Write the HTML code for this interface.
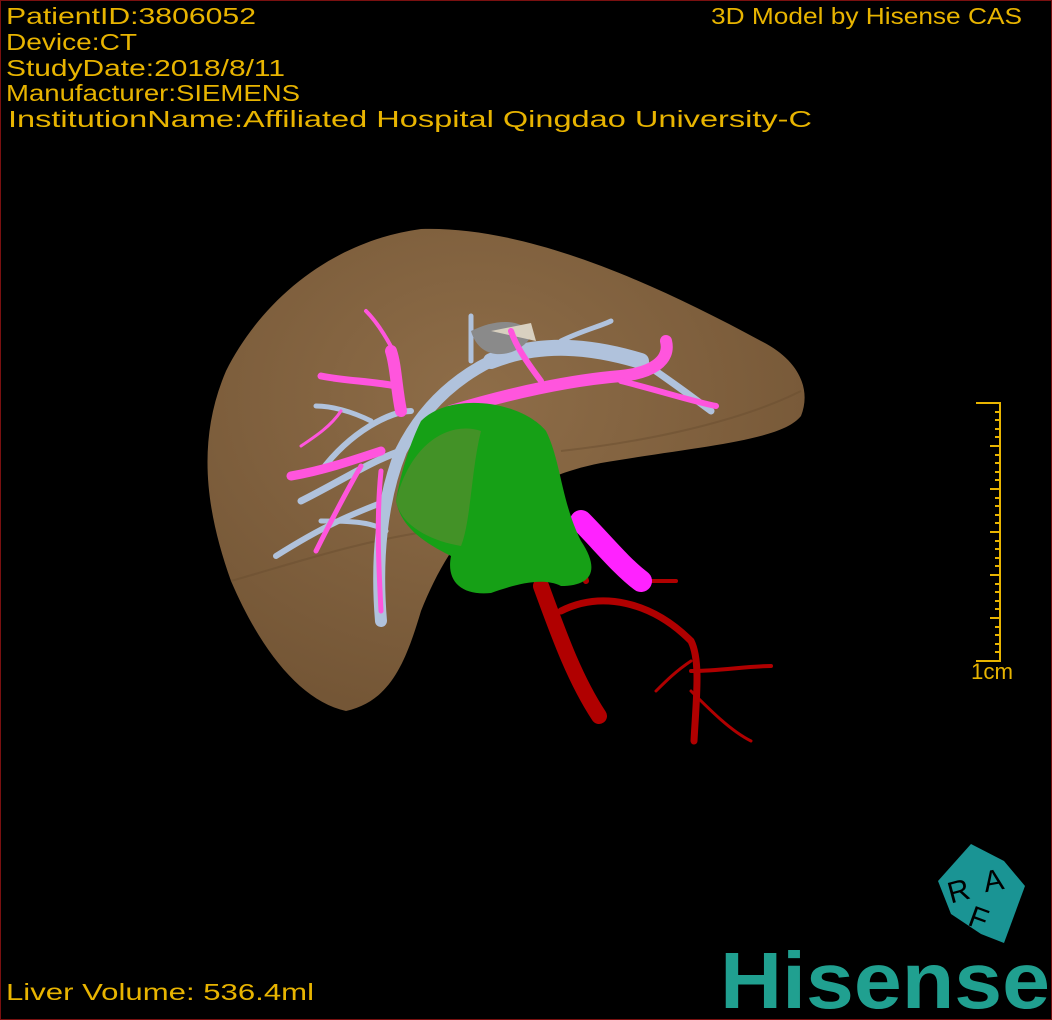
<!DOCTYPE html>
<html><head><meta charset="utf-8"><style>
html,body{margin:0;padding:0;background:#000;}
#c{position:relative;width:1050px;height:1018px;border:1px solid #7a1010;background:#000;overflow:hidden;}
</style></head><body><div id="c">
<svg width="1050" height="1018" style="position:absolute;left:0;top:0">
<defs><radialGradient id="lg" cx="0.45" cy="0.35" r="0.7"><stop offset="0" stop-color="#8e6d48"/><stop offset="1" stop-color="#735535"/></radialGradient></defs>
<g fill="#e8b400" font-family="Liberation Sans,sans-serif" font-size="23" lengthAdjust="spacingAndGlyphs">
<text x="5" y="23" textLength="250" lengthAdjust="spacingAndGlyphs">PatientID:3806052</text>
<text x="5" y="49" textLength="131" lengthAdjust="spacingAndGlyphs">Device:CT</text>
<text x="5" y="75" textLength="279" lengthAdjust="spacingAndGlyphs">StudyDate:2018/8/11</text>
<text x="5" y="100" textLength="294" lengthAdjust="spacingAndGlyphs">Manufacturer:SIEMENS</text>
<text x="7" y="126" textLength="804" lengthAdjust="spacingAndGlyphs">InstitutionName:Affiliated Hospital Qingdao University-C</text>
<text x="710" y="23" textLength="311" lengthAdjust="spacingAndGlyphs">3D Model by Hisense CAS</text>
<text x="5" y="999" textLength="308" lengthAdjust="spacingAndGlyphs">Liver Volume:  536.4ml</text>
<text x="970" y="678" textLength="42" lengthAdjust="spacingAndGlyphs" font-size="22">1cm</text>
</g>
<path d="M420,228 C520,225 640,275 760,340 C800,360 810,390 800,415 C780,440 700,445 600,462 C560,470 545,480 520,488 C470,510 440,560 420,610 C405,660 390,700 345,710 C300,700 260,650 230,580 C205,510 195,440 225,370 C260,300 330,240 420,228 Z" fill="url(#lg)"/>
<path d="M230,580 C300,560 360,540 430,530" stroke="#6a4e30" stroke-width="2" fill="none" opacity=".5"/>
<path d="M560,450 C650,440 740,420 800,390" stroke="#6a4e30" stroke-width="2" fill="none" opacity=".5"/>
<g stroke="#b0c2dc" stroke-linecap="round" fill="none">
<path d="M380,620 C375,560 380,500 400,450 C420,410 450,380 490,360" stroke-width="12"/>
<path d="M490,360 C540,340 590,345 640,360" stroke-width="16"/>
<path d="M640,360 C670,380 690,395 710,410" stroke-width="7"/>
<path d="M400,450 C370,460 340,480 300,500" stroke-width="7"/>
<path d="M385,500 C360,510 330,520 275,555" stroke-width="6"/>
<path d="M370,420 C350,410 330,405 315,405" stroke-width="5"/>
<path d="M410,410 C390,410 350,430 320,470" stroke-width="6"/>
<path d="M385,530 C370,520 345,520 320,520" stroke-width="5"/>
<path d="M560,340 C580,330 600,325 610,320" stroke-width="5"/>
<path d="M470,360 L470,315" stroke-width="5"/>
</g>
<path d="M470,330 C500,315 525,320 530,335 C520,355 480,365 470,330Z" fill="#8a8a8a"/>
<path d="M490,330 L530,322 L535,340 Z" fill="#d8d0c0"/>
<g stroke="#ff55dd" stroke-linecap="round" fill="none">
<path d="M450,410 C500,395 560,380 620,375 C650,372 670,360 665,340" stroke-width="12"/>
<path d="M620,380 C660,390 690,400 715,405" stroke-width="6"/>
<path d="M540,380 C525,360 515,345 510,330" stroke-width="6"/>
<path d="M400,410 C395,385 395,365 390,350" stroke-width="12"/>
<path d="M395,385 C370,380 345,380 320,375" stroke-width="7"/>
<path d="M395,355 C385,335 375,320 365,310" stroke-width="4"/>
<path d="M380,450 C350,460 320,470 290,475" stroke-width="9"/>
<path d="M360,465 C340,500 325,530 315,550" stroke-width="5"/>
<path d="M380,470 C375,520 378,570 380,610" stroke-width="5"/>
<path d="M340,410 C330,425 315,435 300,445" stroke-width="3"/>
</g>
<g stroke="#b00000" stroke-linecap="round" fill="none">
<path d="M545,470 C560,500 575,540 585,580" stroke-width="6"/>
<path d="M540,585 C560,640 575,680 598,715" stroke-width="16"/>
<path d="M560,610 C600,590 650,600 690,640 C700,660 695,700 693,740" stroke-width="7"/>
<path d="M690,670 C720,670 745,665 770,665" stroke-width="4"/>
<path d="M690,690 C710,710 730,730 750,740" stroke-width="3"/>
<path d="M690,660 C675,670 665,680 655,690" stroke-width="3"/>
<path d="M640,580 L675,580" stroke-width="4"/>
</g>
<path d="M580,520 C600,540 620,565 640,580" stroke="#ff22ff" stroke-width="22" stroke-linecap="round" fill="none"/>
<path d="M420,420 C450,390 520,400 545,430 C560,460 560,500 580,540 C600,570 590,585 560,585 C540,575 510,585 490,592 C460,595 445,580 450,555 C420,540 400,525 395,500 C400,470 410,440 420,420 Z" fill="#16a016"/>
<path d="M395,500 C410,440 450,420 480,430 C470,470 470,520 460,545 C430,540 400,525 395,500Z" fill="#4f8f2c" opacity=".8"/>
<path d="M975,402 L999,402 L999,660 L975,660" stroke="#e8b400" stroke-width="2" fill="none"/>
<g stroke="#e8b400" stroke-width="2">
<path d="M989,445H999M989,488H999M989,531H999M989,574H999M989,617H999"/>
<path d="M994,411H999M994,419H999M994,428H999M994,436H999M994,454H999M994,462H999M994,471H999M994,479H999M994,497H999M994,505H999M994,514H999M994,522H999M994,540H999M994,548H999M994,557H999M994,565H999M994,583H999M994,591H999M994,600H999M994,608H999M994,626H999M994,634H999M994,643H999M994,651H999"/>
</g>
<polygon points="970,843 1003,860 1024,885 1003,942 980,933 950,913 937,880" fill="#1a9494"/>
<g fill="#000" font-family="Liberation Sans,sans-serif" font-size="30">
<text x="946" y="900" transform="rotate(-15 958 887)">R</text>
<text x="982" y="890" transform="rotate(-10 990 878)">A</text>
<text x="970" y="928" transform="rotate(20 980 913)">F</text>
</g>
<text x="719" y="1007" font-family="Liberation Sans,sans-serif" font-weight="bold" font-size="80" fill="#20a090" textLength="330" lengthAdjust="spacingAndGlyphs">Hisense</text>
</svg>
</div></body></html>
